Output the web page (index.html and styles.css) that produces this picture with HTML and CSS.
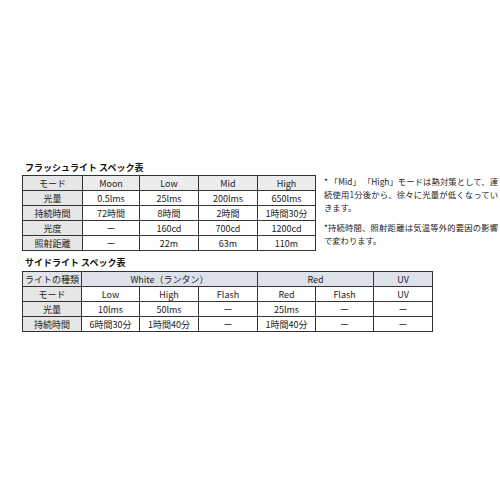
FILE: index.html
```html
<!DOCTYPE html>
<html lang="ja">
<head>
<meta charset="utf-8">
<link rel="stylesheet" href="styles.css">
</head>
<body>
<div class="page">
  <h2 class="title">フラッシュライト スペック表</h2>
  <div class="row">
    <table class="spec spec1">
      <colgroup><col class="c-label"><col class="c57"><col class="c59"><col class="c59"><col class="c58"></colgroup>
      <tr class="head"><th>モード</th><td>Moon</td><td>Low</td><td>Mid</td><td>High</td></tr>
      <tr><th>光量</th><td>0.5lms</td><td>25lms</td><td>200lms</td><td>650lms</td></tr>
      <tr><th>持続時間</th><td>72時間</td><td>8時間</td><td>2時間</td><td>1時間30分</td></tr>
      <tr><th>光度</th><td>ー</td><td>160cd</td><td>700cd</td><td>1200cd</td></tr>
      <tr><th>照射距離</th><td>ー</td><td>22m</td><td>63m</td><td>110m</td></tr>
    </table>
    <div class="notes">
      <p>* 「Mid」 「High」モードは熱対策として、連続使用1分後から、徐々に光量が低くなっていきます。</p>
      <p class="gap">*持続時間、照射距離は気温等外的要因の影響で変わります。</p>
    </div>
  </div>
  <h2 class="title title2">サイドライト スペック表</h2>
  <table class="spec spec2">
    <colgroup><col class="c-label2"><col class="c58"><col class="c59"><col class="c59"><col class="c58"><col class="c58"><col class="c59"></colgroup>
    <tr class="head2"><th>ライトの種類</th><td colspan="3">White（ランタン）</td><td colspan="2">Red</td><td>UV</td></tr>
    <tr><th>モード</th><td>Low</td><td>High</td><td>Flash</td><td>Red</td><td>Flash</td><td>UV</td></tr>
    <tr><th>光量</th><td>10lms</td><td>50lms</td><td>ー</td><td>25lms</td><td>ー</td><td>ー</td></tr>
    <tr><th>持続時間</th><td>6時間30分</td><td>1時間40分</td><td>ー</td><td>1時間40分</td><td>ー</td><td>ー</td></tr>
  </table>
</div>
</body>
</html>
```
FILE: styles.css
```css
html, body {
  margin: 0;
  background: #fff;
}
body {
  font-family: "Noto Sans CJK JP", "Noto Sans", sans-serif;
  color: #222;
}
.page {
  padding: 162px 0 0 22px;
}
.title {
  margin: 0 0 1px 3px;
  font-size: 9px;
  line-height: 12px;
  font-weight: bold;
  color: #111;
}
.title2 {
  margin-top: 6px;
  margin-bottom: 2px;
}
.row {
  display: flex;
  align-items: flex-start;
}
.spec {
  border-collapse: collapse;
  table-layout: fixed;
  font-size: 9px;
}
.spec1 { width: 294px; }
.spec2 { width: 411px; }
.spec th, .spec td {
  border: 1px solid #333;
  height: 14px;
  padding: 0;
  text-align: center;
  vertical-align: middle;
  line-height: 13px;
  font-weight: normal;
  white-space: nowrap;
  overflow: hidden;
}
.spec th {
  background: #e6e6e6;
}
.head td {
  background: #ececec;
}
.head2 th, .head2 td {
  background: #dde2ea;
}
.head2 th {
  background: #e0e3e8;
}
.c-label { width: 60px; }
.c-label2 { width: 59px; }
.c57 { width: 57px; }
.c58 { width: 58px; }
.c59 { width: 59px; }
.notes {
  margin-left: 8px;
  width: 174px;
  font-size: 8.3px;
  line-height: 13px;
  color: #222;
  text-align: justify;
}
.notes p {
  margin: 0;
}
.notes .gap {
  margin-top: 7px;
}
```
